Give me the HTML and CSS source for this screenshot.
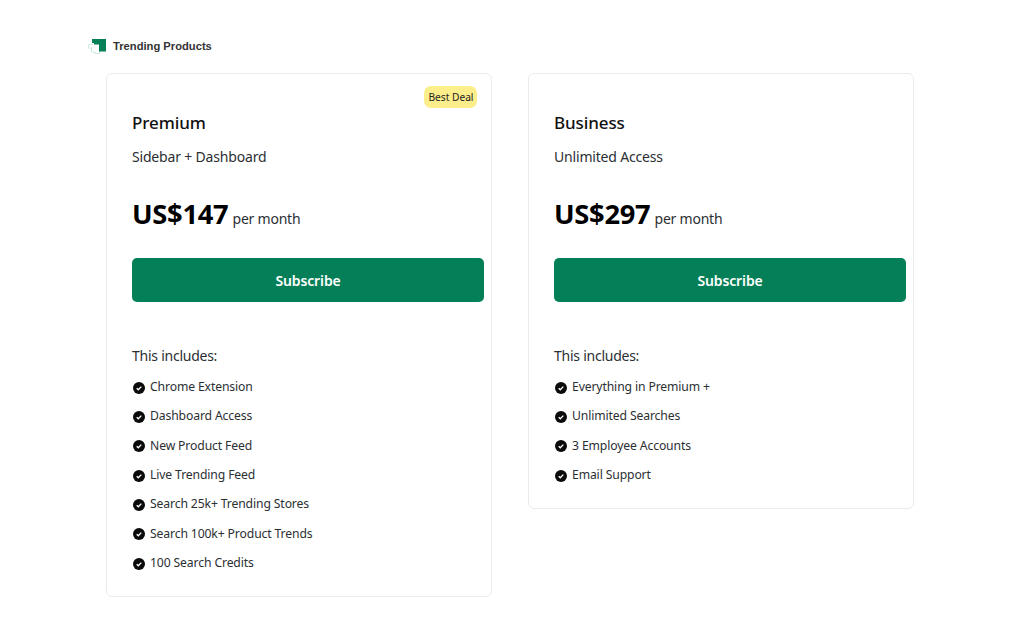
FILE: index.html
```html
<!DOCTYPE html>
<html lang="en">
<head>
<meta charset="utf-8">
<title>Trending Products</title>
<link rel="stylesheet" href="styles.css">
</head>
<body>
<main class="page">
  <header class="brand">
    <svg class="logo" width="18" height="16" viewBox="0 0 18 16"><path d="M.5 6.500V10h3v4H7v1.500h4.500V13M.5 6.500H5" fill="none" stroke="#cfe8e2" stroke-width="1"/><path d="M4 1h14v12.500h-7V6.500H6V5H4z" fill="#047f57"/></svg>
    <span class="brand-name">Trending Products</span>
  </header>
  <section class="plans">
    <article class="card">
      <span class="badge">Best Deal</span>
      <h2 class="plan-name">Premium</h2>
      <p class="plan-desc">Sidebar + Dashboard</p>
      <p class="price"><strong class="amount">US$147</strong> <span class="period">per month</span></p>
      <button class="subscribe">Subscribe</button>
      <p class="includes">This includes:</p>
      <ul class="features">
        <li class="feature"><svg class="check" viewBox="0 0 12 12"><circle cx="6" cy="6" r="6"/><path d="M3.700 6.200l1.600 1.600 3-3.200"/></svg>Chrome Extension</li>
        <li class="feature"><svg class="check" viewBox="0 0 12 12"><circle cx="6" cy="6" r="6"/><path d="M3.700 6.200l1.600 1.600 3-3.200"/></svg>Dashboard Access</li>
        <li class="feature"><svg class="check" viewBox="0 0 12 12"><circle cx="6" cy="6" r="6"/><path d="M3.700 6.200l1.600 1.600 3-3.200"/></svg>New Product Feed</li>
        <li class="feature"><svg class="check" viewBox="0 0 12 12"><circle cx="6" cy="6" r="6"/><path d="M3.700 6.200l1.600 1.600 3-3.200"/></svg>Live Trending Feed</li>
        <li class="feature"><svg class="check" viewBox="0 0 12 12"><circle cx="6" cy="6" r="6"/><path d="M3.700 6.200l1.600 1.600 3-3.200"/></svg>Search 25k+ Trending Stores</li>
        <li class="feature"><svg class="check" viewBox="0 0 12 12"><circle cx="6" cy="6" r="6"/><path d="M3.700 6.200l1.600 1.600 3-3.200"/></svg>Search 100k+ Product Trends</li>
        <li class="feature"><svg class="check" viewBox="0 0 12 12"><circle cx="6" cy="6" r="6"/><path d="M3.700 6.200l1.600 1.600 3-3.200"/></svg>100 Search Credits</li>
      </ul>
    </article>
    <article class="card">
      <h2 class="plan-name">Business</h2>
      <p class="plan-desc">Unlimited Access</p>
      <p class="price"><strong class="amount">US$297</strong> <span class="period">per month</span></p>
      <button class="subscribe">Subscribe</button>
      <p class="includes">This includes:</p>
      <ul class="features">
        <li class="feature"><svg class="check" viewBox="0 0 12 12"><circle cx="6" cy="6" r="6"/><path d="M3.700 6.200l1.600 1.600 3-3.200"/></svg>Everything in Premium +</li>
        <li class="feature"><svg class="check" viewBox="0 0 12 12"><circle cx="6" cy="6" r="6"/><path d="M3.700 6.200l1.600 1.600 3-3.200"/></svg>Unlimited Searches</li>
        <li class="feature"><svg class="check" viewBox="0 0 12 12"><circle cx="6" cy="6" r="6"/><path d="M3.700 6.200l1.600 1.600 3-3.200"/></svg>3 Employee Accounts</li>
        <li class="feature"><svg class="check" viewBox="0 0 12 12"><circle cx="6" cy="6" r="6"/><path d="M3.700 6.200l1.600 1.600 3-3.200"/></svg>Email Support</li>
      </ul>
    </article>
  </section>
</main>
</body>
</html>
```
FILE: styles.css
```css
* { box-sizing: border-box; }
html, body { margin: 0; padding: 0; background: #fff; }
body { font-family: "Noto Sans", "Open Sans", sans-serif; color: #2b2f33; height: 618px; overflow: hidden; }
.page { padding: 38px 0 0 88px; }
.brand { display: flex; align-items: center; gap: 7px; height: 16px; }
.logo { flex: none; }
.brand-name { font-family: "Liberation Sans", sans-serif; font-weight: 700; font-size: 11.200px; color: #333; }
.plans { display: flex; align-items: flex-start; gap: 36px; margin: 19px 0 0 18px; }
.card { position: relative; width: 386px; padding: 37px 25px 19px; border: 1px solid #e9ecef; border-radius: 6px; }
.badge { position: absolute; top: 12px; right: 14px; height: 22px; padding: 0 3.500px 0 4px; border-radius: 7px; background: #fdee8c; font-size: 10.200px; line-height: 22px; color: #222; }
.plan-name { margin: 0; font-size: 17px; line-height: 24px; font-weight: 500; color: #111; letter-spacing: -0.1px; }
.plan-desc { margin: 12px 0 0; font-size: 14px; line-height: 20px; letter-spacing: -0.18px; }
.price { margin: 28px 0 0; line-height: 38px; }
.amount { font-size: 27.300px; font-weight: 700; color: #000; letter-spacing: -0.3px; }
.period { font-size: 14px; letter-spacing: -0.22px; }
.subscribe { display: block; width: 352px; height: 44px; margin: 20px 0 0; border: 0; border-radius: 5px; background: #047f57; color: #fff; font-family: inherit; font-size: 14px; font-weight: 600; letter-spacing: -0.13px; }
.includes { margin: 44px 0 0; font-size: 14px; line-height: 20px; letter-spacing: -0.25px; }
.features { margin: 6px 0 0; padding: 0; list-style: none; }
.feature { display: flex; align-items: center; height: 29.330px; font-size: 12.200px; letter-spacing: -0.13px; }
.check { flex: none; width: 12px; height: 12px; margin: 2px 5px 0 1px; }
.check circle { fill: #0a0a0a; }
.check path { fill: none; stroke: #fff; stroke-width: 1.300; }
```
